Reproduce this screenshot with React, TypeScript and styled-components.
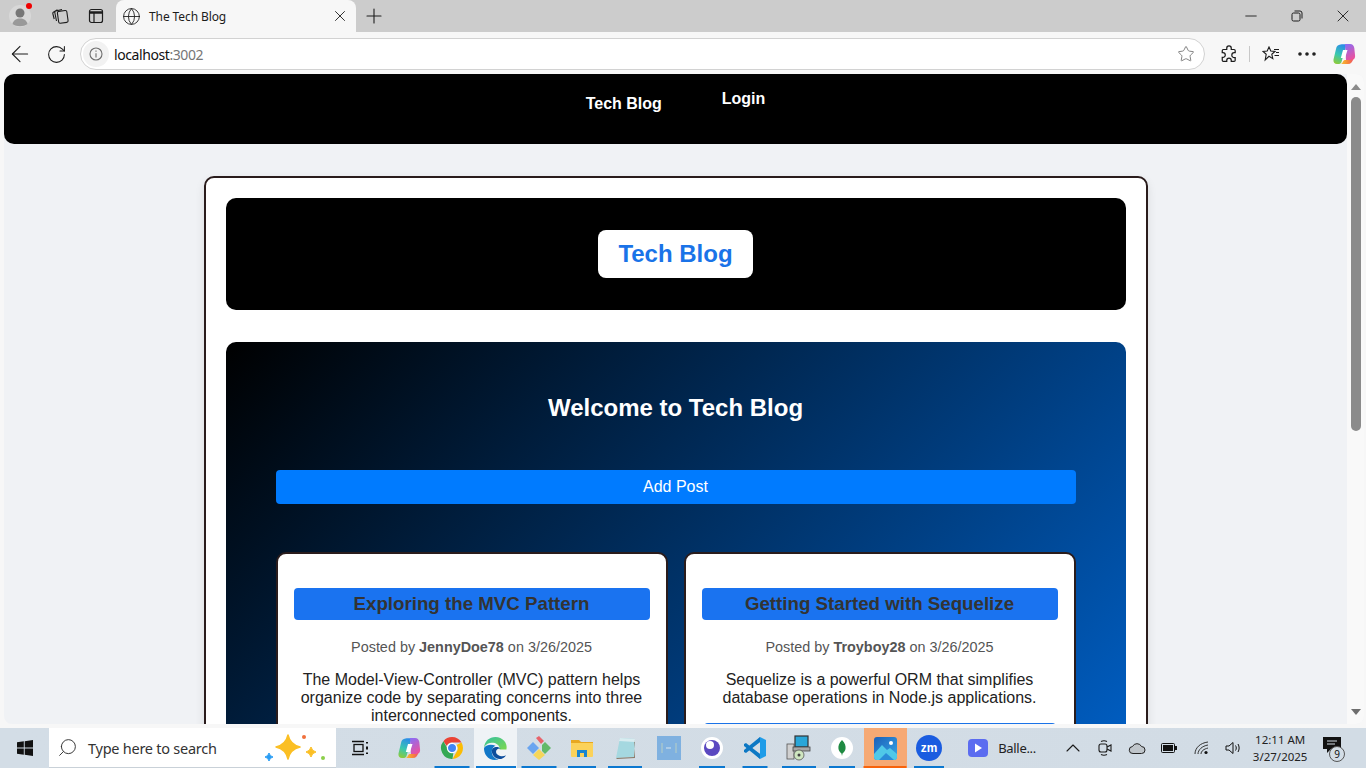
import React from "react";
import styled, { createGlobalStyle } from "styled-components";
import { ArrowLeft, RotateCw, Star, MoreHorizontal, X, Plus, Minus, Globe, Search, ChevronUp } from "lucide-react";

const GlobalStyle = createGlobalStyle`
  html, body {
    margin: 0;
    padding: 0;
    height: 100%;
    overflow: hidden;
    font-family: "Liberation Sans", Arial, sans-serif;
  }
  * { box-sizing: border-box; }
`;

const Screen = styled.div`
  width: 1366px;
  height: 768px;
  display: flex;
  flex-direction: column;
  background: #f7f7f7;
  overflow: hidden;
`;

/* browser chrome */
const TabStrip = styled.div`
  height: 32px;
  flex: none;
  background: #cccccc;
  display: flex;
  align-items: flex-end;
  color: #1c1c1c;
`;

const StripButton = styled.div<{ $w: number }>`
  width: ${(p) => p.$w}px;
  height: 32px;
  flex: none;
  display: flex;
  align-items: center;
  justify-content: center;
`;

const Avatar = styled.div`
  position: relative;
  width: 40px;
  height: 32px;
  flex: none;
  display: flex;
  align-items: center;
  justify-content: center;
`;

const RedDot = styled.span`
  position: absolute;
  top: 3px;
  left: 26px;
  width: 6px;
  height: 6px;
  border-radius: 50%;
  background: #f00000;
`;

const Tab = styled.div`
  width: 240px;
  height: 32px;
  flex: none;
  margin-left: 4px;
  background: #f7f7f7;
  border-radius: 8px 8px 0 0;
  display: flex;
  align-items: center;
  padding: 0 7px 0 6px;
  font-family: "Noto Sans", sans-serif;
  font-size: 12px;
`;

const TabTitle = styled.span`
  flex: 1;
  margin-left: 8px;
  letter-spacing: -0.1px;
`;

const StripSpacer = styled.div`
  flex: 1;
`;

const Toolbar = styled.div`
  height: 40px;
  flex: none;
  background: #f7f7f7;
  display: flex;
  align-items: center;
  color: #1c1c1c;
  padding-top: 4px;
`;

const ToolButton = styled.div<{ $w: number }>`
  width: ${(p) => p.$w}px;
  height: 32px;
  flex: none;
  display: flex;
  align-items: center;
  justify-content: center;
`;

const AddressBar = styled.div`
  width: 1125px;
  height: 32px;
  flex: none;
  margin: 0 4px 0 8px;
  background: #ffffff;
  border: 1px solid #d2d2d2;
  border-radius: 16px;
  display: flex;
  align-items: center;
  padding: 0 9px 0 2px;
`;

const InfoPill = styled.div`
  width: 26px;
  height: 26px;
  flex: none;
  border-radius: 50%;
  background: #f2f2f2;
  display: flex;
  align-items: center;
  justify-content: center;
`;

const Url = styled.div`
  flex: 1;
  margin-left: 5px;
  font-family: "Noto Sans", sans-serif;
  font-size: 14px;
  letter-spacing: -0.42px;
  color: #111111;
  span { color: #767676; }
`;

const ToolDivider = styled.div`
  width: 1px;
  height: 16px;
  flex: none;
  background: #c8c8c8;
`;

/* page viewport */
const Viewport = styled.div`
  height: 650px;
  flex: none;
  margin: 2px 2px 4px 4px;
  border-radius: 8px;
  background: #f0f2f5;
  display: flex;
  overflow: hidden;
`;

const PageScroll = styled.div`
  flex: 1;
  min-width: 0;
  overflow: hidden;
`;

const ScrollTrack = styled.div`
  width: 17px;
  flex: none;
  background: #f9f9f9;
  display: flex;
  flex-direction: column;
  align-items: center;
  padding-top: 10px;
`;

const ScrollThumb = styled.div`
  width: 10px;
  height: 334px;
  margin-top: 7px;
  border-radius: 5px;
  background: #8b8b8b;
`;

const ScrollDown = styled.div`
  margin-top: auto;
  margin-bottom: 9px;
  line-height: 0;
`;

const NavBar = styled.nav`
  height: 70px;
  background: #000000;
  border-radius: 10px;
  display: flex;
  justify-content: center;
  gap: 60px;
  padding-top: 16px;
  color: #ffffff;
  font-size: 16px;
  font-weight: 700;
  line-height: 18px;
`;

const NavBrand = styled.div`
  margin-top: 5px;
`;

const NavLink = styled.div``;

const Container = styled.div`
  width: 944px;
  margin: 32px auto 0;
  padding: 20px;
  background: #ffffff;
  border: 2px solid #2a1c1c;
  border-radius: 10px;
  box-shadow: 0 4px 10px rgba(0, 0, 0, 0.1);
`;

const Hero = styled.header`
  height: 112px;
  background: #000000;
  border-radius: 10px;
  display: flex;
  align-items: center;
  justify-content: center;
`;

const Logo = styled.div`
  width: 155px;
  height: 48px;
  background: #ffffff;
  border-radius: 8px;
  display: flex;
  align-items: center;
  justify-content: center;
  color: #1a73e8;
  font-size: 24px;
  font-weight: 700;
`;

const Main = styled.main`
  margin-top: 32px;
  min-height: 810px;
  padding: 52px 50px 40px;
  border-radius: 10px;
  background: linear-gradient(135deg, #000000, #007bff);
`;

const Welcome = styled.h2`
  margin: 0;
  color: #ffffff;
  font-size: 24px;
  line-height: 28px;
  font-weight: 700;
  text-align: center;
`;

const AddPost = styled.button`
  display: block;
  width: 100%;
  height: 34px;
  margin-top: 48px;
  border: none;
  border-radius: 4px;
  background: #007bff;
  color: #ffffff;
  font-family: inherit;
  font-size: 16px;
`;

const PostGrid = styled.div`
  margin-top: 48px;
  display: grid;
  grid-template-columns: 1fr 1fr;
  gap: 16px;
`;

const Card = styled.article`
  background: #ffffff;
  border: 2px solid #2a1c1c;
  border-radius: 10px;
  padding: 34px 16px 16px;
  text-align: center;
`;

const CardTitle = styled.h3`
  margin: 0;
  height: 32px;
  background: #1a73f0;
  border-radius: 4px;
  color: #333333;
  font-size: 18.72px;
  line-height: 31px;
  font-weight: 700;
`;

const Meta = styled.p`
  margin: 19px 0 0;
  color: #555555;
  font-size: 14.4px;
  line-height: 16px;
`;

const Body = styled.p`
  margin: 16px 0 0;
  color: #222222;
  font-size: 16px;
  line-height: 18px;
`;

const CardAction = styled.div`
  height: 34px;
  margin: 16px 2px 0;
  background: #1a73e8;
  border-radius: 4px;
`;

/* windows taskbar */
const Taskbar = styled.div`
  height: 40px;
  flex: none;
  background: linear-gradient(90deg, #d3dde6, #d2dce5);
  display: flex;
  align-items: stretch;
`;

const StartButton = styled.div`
  width: 49px;
  flex: none;
  display: flex;
  align-items: center;
  justify-content: center;
`;

const SearchBox = styled.div`
  width: 287px;
  flex: none;
  background: #ffffff;
  border-bottom: 1px solid #c9d1d8;
  display: flex;
  align-items: center;
  padding-left: 8px;
  font-family: "Noto Sans", sans-serif;
  font-size: 14.5px;
  color: #333333;
`;

const SearchGlass = styled(Search)`
  transform: scaleX(-1);
`;

const SearchText = styled.span`
  flex: 1;
  margin-left: 10px;
  letter-spacing: -0.25px;
`;

const SearchSparkles = styled.svg`
  margin-right: 9px;
`;

const TaskIcons = styled.div`
  display: flex;
  margin-left: 8px;
  flex: none;
`;

const TaskItem = styled.div<{ $line?: number; $active?: boolean; $open?: boolean }>`
  position: relative;
  width: 43.3px;
  flex: none;
  display: flex;
  align-items: center;
  justify-content: center;
  background: ${(p) => (p.$open ? "#f6a974" : p.$active ? "#eff3f6" : "transparent")};

  &::after {
    content: "";
    position: absolute;
    left: 50%;
    bottom: 0;
    transform: translateX(-50%);
    width: ${(p) => p.$line ?? 0}px;
    height: 2px;
    background: ${(p) => (p.$open ? "#f7630c" : "#0b78d0")};
  }
`;

const TaskViewGlyph = styled.svg`
  margin-right: 12px;
`;

const AppButton = styled.div`
  width: 107px;
  flex: none;
  display: flex;
  align-items: center;
  gap: 10px;
  padding-left: 18px;
  font-family: "Noto Sans", sans-serif;
  font-size: 13px;
  letter-spacing: -0.3px;
  color: #222222;
`;

const TrayIcon = styled.div`
  width: 32px;
  flex: none;
  display: flex;
  align-items: center;
  justify-content: center;
  color: #1a1a1a;
`;

const Clock = styled.div`
  width: 62px;
  flex: none;
  display: flex;
  flex-direction: column;
  align-items: center;
  justify-content: center;
  font-family: "Noto Sans", sans-serif;
  font-size: 11.5px;
  line-height: 17px;
  color: #222222;
`;

const Notify = styled.div`
  position: relative;
  flex: 1;
  display: flex;
  align-items: center;
  justify-content: center;
`;

const NotifyGlyph = styled.svg`
  margin: -6px 14px 0 0;
`;

const NotifyBadge = styled.span`
  position: absolute;
  left: 18px;
  top: 18px;
  width: 16px;
  height: 16px;
  border-radius: 50%;
  background: #d3dde6;
  border: 1px solid #555555;
  font-family: "Noto Sans", sans-serif;
  font-size: 10px;
  line-height: 14px;
  text-align: center;
  color: #111111;
`;

const spark = (x: number, y: number, r: number) => {
  const k = r * 0.18;
  return `M${x} ${y - r}Q${x + k} ${y - k} ${x + r} ${y}Q${x + k} ${y + k} ${x} ${y + r}Q${x - k} ${y + k} ${x - r} ${y}Q${x - k} ${y - k} ${x} ${y - r}Z`;
};

function CopilotLogo({ size }: { size: number }) {
  return (
    <svg width={size} height={size} viewBox="0 0 24 24">
      <defs>
        <linearGradient id="cpA" x1="0.6" y1="0" x2="0.3" y2="1">
          <stop offset="0" stopColor="#2b8ce8" />
          <stop offset="0.55" stopColor="#38c8b0" />
          <stop offset="1" stopColor="#8ccb3c" />
        </linearGradient>
        <linearGradient id="cpB" x1="0.3" y1="0" x2="0.7" y2="1">
          <stop offset="0" stopColor="#8f6cf0" />
          <stop offset="1" stopColor="#f0509a" />
        </linearGradient>
        <linearGradient id="cpC" x1="0" y1="0" x2="1" y2="0">
          <stop offset="0" stopColor="#f5d030" />
          <stop offset="0.6" stopColor="#f78a38" />
          <stop offset="1" stopColor="#f0506a" />
        </linearGradient>
      </defs>
      <path d="M8.500 2.500C10 2 13 2 14.500 2.500L9.500 20C9 21.500 8 22 6 22H5C2.500 22 1 20 1.500 17.500L4 7C4.500 4 6 3 8.500 2.500Z" fill="url(#cpA)" />
      <path d="M13 2H18C20.500 2 21.800 3.500 22.300 6L23 13C23.500 16 22 18 19 18H14Z" fill="url(#cpB)" />
      <path d="M7 22H16C19 22 20.500 20 21.500 16.500C20.500 17.800 19 18 17 18H13C11.500 18 11 19.500 10.500 20.500C10 21.500 9 22 7 22Z" fill="url(#cpC)" />
      <path d="M11 8H15.500L13 16H8.800Z" fill="#ffffff" />
    </svg>
  );
}

function ChromeLogo() {
  return (
    <svg width="24" height="24" viewBox="0 0 24 24">
      <path d="M12 1a11 11 0 0 1 9.500 5.500H12a5.500 5.500 0 0 0-5.200 3.600L3.400 5.200A11 11 0 0 1 12 1z" fill="#ea4335" />
      <path d="M21.500 6.500A11 11 0 0 1 12.500 23l4.300-7.500A5.500 5.500 0 0 0 16.500 9z" fill="#fbbc04" />
      <path d="M12.500 23A11 11 0 0 1 3.400 5.200l4.500 8a5 5 0 0 0 5.500 3.300z" fill="#34a853" />
      <circle cx="12" cy="12" r="4.600" fill="#4285f4" stroke="#ffffff" strokeWidth="1.200" />
    </svg>
  );
}

function EdgeLogo() {
  return (
    <svg width="25" height="25" viewBox="0 0 24 24">
      <defs>
        <linearGradient id="edA" x1="0" y1="0" x2="1" y2="1">
          <stop offset="0" stopColor="#35c1a0" />
          <stop offset="1" stopColor="#7bd84e" />
        </linearGradient>
      </defs>
      <path d="M12 1C6 1 1.500 5 1 11c2-4 6-5 9-4.500 4 .7 6.500 3.500 6 6.500h6.500C24 6.500 18.500 1 12 1z" fill="url(#edA)" />
      <path d="M1 11c-.5 6 3.500 12 10.500 12 1.500 0 2.500-.2 3.500-.6-4-.6-7-3.800-6.500-8 .3-2.500 1.800-4.400 3.500-5-4-2-9-1-10.500 1.600z" fill="#1278c8" />
      <path d="M8.500 14.500c0 4.500 4 8.500 9 7.500 2-.5 3.800-2 4.500-3.500-2 1.200-5.500 1.200-7.500-.3-1.500-1-2-2.200-2-3.200 0-2 2-3.500 4.500-3-2.500-2.500-8.500-2-8.500 2.500z" fill="#0c4d9c" />
    </svg>
  );
}

function TaskSvg({ name }: { name: string }) {
  switch (name) {
    case "git":
      return (
        <svg width="26" height="26" viewBox="0 0 26 26">
          <path d="M1 13l6-6 6 6-6 6z" fill="#6aa5f0" />
          <path d="M10 3l3-2 5 5-3 3z" fill="#e8636b" />
          <path d="M16 10l3-3 6 6-6 6-3-3z" fill="#63b96a" />
          <path d="M7 20l6-6 6 6-6 5z" fill="#f5d65a" />
        </svg>
      );
    case "folder":
      return (
        <svg width="24" height="24" viewBox="0 0 24 24">
          <path d="M1 4h8l2 2h12v4H1z" fill="#e8a820" />
          <path d="M1 7h22v13a1 1 0 0 1-1 1H2a1 1 0 0 1-1-1z" fill="#fbd25a" />
          <path d="M7 14h10v7h-3v-4h-4v4H7z" fill="#1a86d0" />
        </svg>
      );
    case "notepad":
      return (
        <svg width="24" height="24" viewBox="0 0 24 24">
          <path d="M7 2l15 1-1 18-18 1z" fill="#a5d8e0" />
          <path d="M21 4l1-1-1 18-18 1 1 1 18-1z" fill="#8a7a68" />
          <path d="M7 2l15 1-.2 3L6 5z" fill="#d8ecf0" />
        </svg>
      );
    case "box":
      return (
        <svg width="24" height="24" viewBox="0 0 24 24">
          <rect width="24" height="24" fill="#7fb1e0" />
          <path d="M5 7v10M19 7v10" stroke="#b9cfc4" strokeWidth="1" />
          <path d="M9 12h5" stroke="#d8e6f0" strokeWidth="1" />
        </svg>
      );
    case "moon":
      return (
        <svg width="22" height="22" viewBox="0 0 22 22">
          <circle cx="11" cy="11" r="11" fill="#ffffff" />
          <circle cx="11" cy="11" r="8" fill="#5a48c0" />
          <circle cx="9" cy="8" r="4" fill="#ffffff" />
        </svg>
      );
    case "vscode":
      return (
        <svg width="24" height="24" viewBox="0 0 24 24">
          <path d="M17 1l6 3v16l-6 3-10-10z" fill="#1f9ce8" />
          <path d="M17 6v12l-9-6z" fill="#d3dde6" />
          <path d="M1 8l2-1 14 11v5L1 10z" fill="#0d78c4" />
          <path d="M1 16l2 1L17 6V1L1 14z" fill="#0d78c4" />
        </svg>
      );
    case "installer":
      return (
        <svg width="26" height="26" viewBox="0 0 26 26">
          <rect x="1" y="9" width="7" height="15" fill="#d0d0d0" stroke="#555" strokeWidth="0.8" />
          <rect x="9" y="1" width="13" height="11" fill="#2aa6d8" stroke="#333" strokeWidth="1.200" />
          <rect x="7" y="12" width="17" height="4" fill="#a8a8a8" stroke="#444" strokeWidth="0.8" />
          <circle cx="13" cy="20" r="5" fill="#cfe6c0" stroke="#555" strokeWidth="0.8" />
          <circle cx="13" cy="20" r="1.500" fill="#444" />
        </svg>
      );
    case "mongo":
      return (
        <svg width="22" height="22" viewBox="0 0 22 22">
          <circle cx="11" cy="11" r="11" fill="#ffffff" />
          <path d="M11 3c3 3 4 6 3.500 9-.4 2-2 3.500-3 4.500l-.5 2.500-.5-2.500c-1-1-2.600-2.500-3-4.500C7 9 8 6 11 3z" fill="#1f8a42" />
        </svg>
      );
    case "photos":
      return (
        <svg width="23" height="23" viewBox="0 0 23 23">
          <defs>
            <linearGradient id="phA" x1="0" y1="0" x2="1" y2="1">
              <stop offset="0" stopColor="#1c5fb8" />
              <stop offset="1" stopColor="#35a8e8" />
            </linearGradient>
          </defs>
          <rect width="23" height="23" rx="3" fill="url(#phA)" />
          <path d="M0 17l8-9 5 5 3-2 7 6v3a3 3 0 0 1-3 3H3a3 3 0 0 1-3-3z" fill="#4fc8e8" />
          <path d="M5 23l7-7 8 7z" fill="#2a8cd8" />
          <circle cx="17" cy="6" r="2" fill="#ffffff" />
        </svg>
      );
    default:
      return (
        <svg width="26" height="26" viewBox="0 0 24 24">
          <circle cx="12" cy="12" r="12" fill="#1a5ce0" />
          <text x="12" y="16" textAnchor="middle" fontFamily="Liberation Sans" fontWeight="700" fontSize="11" fill="#ffffff">zm</text>
        </svg>
      );
  }
}

const taskApps = [
  { key: "git", line: 35 },
  { key: "folder", line: 28 },
  { key: "notepad", line: 34 },
  { key: "box", line: 0 },
  { key: "moon", line: 26 },
  { key: "vscode", line: 25 },
  { key: "installer", line: 34 },
  { key: "mongo", line: 26 },
];

const posts = [
  {
    title: "Exploring the MVC Pattern",
    author: "JennyDoe78",
    date: "3/26/2025",
    body: "The Model-View-Controller (MVC) pattern helps organize code by separating concerns into three interconnected components.",
  },
  {
    title: "Getting Started with Sequelize",
    author: "Troyboy28",
    date: "3/26/2025",
    body: "Sequelize is a powerful ORM that simplifies database operations in Node.js applications.",
  },
];

export default function App() {
  return (
    <Screen>
      <GlobalStyle />
      <TabStrip>
        <Avatar>
          <svg width="22" height="24" viewBox="0 0 22 24">
            <circle cx="11" cy="12" r="11" fill="#d8d8d8" />
            <circle cx="11" cy="9" r="4.500" fill="#777" />
            <path d="M3.500 20c1-4 4-5.500 7.500-5.500s6.500 1.500 7.500 5.500c-4 3-11 3-15 0z" fill="#999" />
          </svg>
          <RedDot />
        </Avatar>
        <StripButton $w={40}>
          <svg width="18" height="18" viewBox="0 0 18 18" fill="none" stroke="#1c1c1c" strokeWidth="1.100">
            <rect x="7" y="4" width="9.500" height="12" rx="1.500" transform="rotate(-8 11 10)" />
            <path d="M5.500 14L3.800 5.500c-.1-.8.300-1.300 1-1.500L11 2.500M3.200 12L1.800 6.500c-.2-.8.200-1.300.8-1.600L6.500 2.800" />
          </svg>
        </StripButton>
        <StripButton $w={32}>
          <svg width="16" height="16" viewBox="0 0 16 16" fill="none" stroke="#1c1c1c" strokeWidth="1.200">
            <rect x="1.500" y="1.500" width="13" height="13" rx="2" />
            <path d="M1.500 4.500h13" strokeWidth="2.500" />
            <path d="M6 5v9.500" />
          </svg>
        </StripButton>
        <Tab>
          <Globe size={19} strokeWidth={1.1} />
          <TabTitle>The Tech Blog</TabTitle>
          <X size={18} strokeWidth={1.2} />
        </Tab>
        <StripButton $w={36}>
          <Plus size={24} strokeWidth={1.1} />
        </StripButton>
        <StripSpacer />
        <StripButton $w={46}>
          <Minus size={18} strokeWidth={1.2} />
        </StripButton>
        <StripButton $w={46}>
          <svg width="12" height="12" viewBox="0 0 12 12" fill="none" stroke="#1c1c1c" strokeWidth="1">
            <rect x="1" y="3" width="8" height="8" rx="1.500" />
            <path d="M3.500 1h5.500a2 2 0 0 1 2 2v5.500" />
          </svg>
        </StripButton>
        <StripButton $w={46}>
          <X size={20} strokeWidth={1.1} />
        </StripButton>
      </TabStrip>

      <Toolbar>
        <ToolButton $w={40}>
          <ArrowLeft size={26} strokeWidth={1} />
        </ToolButton>
        <ToolButton $w={32}>
          <RotateCw size={21} strokeWidth={1.2} />
        </ToolButton>
        <AddressBar>
          <InfoPill>
            <svg width="14" height="14" viewBox="0 0 14 14" fill="none" stroke="#6e6e6e" strokeWidth="1.100">
              <circle cx="7" cy="7" r="6" />
              <path d="M7 6.200V10.500M7 3.600v1.200" />
            </svg>
          </InfoPill>
          <Url>
            localhost<span>:3002</span>
          </Url>
          <Star size={18} strokeWidth={1.1} color="#6a6a6a" />
        </AddressBar>
        <ToolButton $w={40}>
          <svg width="18" height="18" viewBox="0 0 16 16" fill="none" stroke="#1c1c1c" strokeWidth="1.100">
            <path d="M6 2.800a2 2 0 0 1 4 0V4h2.500a1 1 0 0 1 1 1v1.800h-.8a2 2 0 0 0 0 4.400h.8v2.300a1 1 0 0 1-1 1H10v-.8a2 2 0 0 0-4 0v.8H3a1 1 0 0 1-1-1V11h.6a2 2 0 0 0 0-4.200H2V5a1 1 0 0 1 1-1h3z" />
          </svg>
        </ToolButton>
        <ToolDivider />
        <ToolButton $w={41}>
          <svg width="18" height="16" viewBox="0 0 18 16" fill="none" stroke="#1c1c1c" strokeWidth="1.100">
            <path d="M7 1l1.800 4 4.200.4-3.200 2.900 1 4.300L7 10.300 3.200 14l1-5.700L1 5.400 5.200 5z" />
            <path d="M12 3.500h5M14 6.500h3M12.500 9.500h4.500" />
          </svg>
        </ToolButton>
        <ToolButton $w={32}>
          <MoreHorizontal size={24} strokeWidth={1.6} />
        </ToolButton>
        <ToolButton $w={42}>
          <CopilotLogo size={24} />
        </ToolButton>
      </Toolbar>

      <Viewport>
        <PageScroll>
          <NavBar>
            <NavBrand>Tech Blog</NavBrand>
            <NavLink>Login</NavLink>
          </NavBar>
          <Container>
            <Hero>
              <Logo>Tech Blog</Logo>
            </Hero>
            <Main>
              <Welcome>Welcome to Tech Blog</Welcome>
              <AddPost>Add Post</AddPost>
              <PostGrid>
                {posts.map((post) => (
                  <Card key={post.title}>
                    <CardTitle>{post.title}</CardTitle>
                    <Meta>
                      Posted by <strong>{post.author}</strong> on {post.date}
                    </Meta>
                    <Body>{post.body}</Body>
                    <CardAction />
                  </Card>
                ))}
              </PostGrid>
            </Main>
          </Container>
        </PageScroll>
        <ScrollTrack>
          <svg width="10" height="6" viewBox="0 0 10 6">
            <path d="M5 0l5 6H0z" fill="#8b8b8b" />
          </svg>
          <ScrollThumb />
          <ScrollDown>
            <svg width="10" height="6" viewBox="0 0 10 6">
              <path d="M5 6l5-6H0z" fill="#6e6e6e" />
            </svg>
          </ScrollDown>
        </ScrollTrack>
      </Viewport>

      <Taskbar>
        <StartButton>
          <svg width="16" height="16" viewBox="0 0 16 16" fill="#111111">
            <path d="M0 2.300l6.800-1v6.300H0zM7.700 1.200L16 0v7.600H7.700zM0 8.400h6.800v6.300l-6.800-1zM7.700 8.400H16V16l-8.300-1.200z" />
          </svg>
        </StartButton>
        <SearchBox>
          <SearchGlass size={21} strokeWidth={1.1} />
          <SearchText>Type here to search</SearchText>
          <SearchSparkles width="66" height="30" viewBox="0 0 66 30">
            <path d={spark(27, 14, 12)} fill="#fbbf24" stroke="#fbbf24" strokeWidth="1.500" strokeLinejoin="round" />
            <path d={spark(50, 19, 5)} fill="#fbbf24" stroke="#fbbf24" strokeWidth="1" />
            <path d={spark(8, 24, 4)} fill="#2a9df4" stroke="#2a9df4" strokeWidth="1" />
            <circle cx="43" cy="4" r="2" fill="#f0703c" />
            <circle cx="62" cy="25" r="2" fill="#8ccf4a" />
          </SearchSparkles>
        </SearchBox>
        <TaskIcons>
          <TaskItem>
            <TaskViewGlyph width="18" height="18" viewBox="0 0 18 18" fill="none" stroke="#111" strokeWidth="1.300">
              <path d="M1 2.500h12M1 15.500h12" />
              <rect x="3" y="5.500" width="9" height="7" />
              <path d="M16 3v1.500M16 7.500v3M16 13.500V15" strokeWidth="2" />
            </TaskViewGlyph>
          </TaskItem>
          <TaskItem>
            <CopilotLogo size={24} />
          </TaskItem>
          <TaskItem $line={35}>
            <ChromeLogo />
          </TaskItem>
          <TaskItem $active $line={40}>
            <EdgeLogo />
          </TaskItem>
          {taskApps.map((app) => (
            <TaskItem key={app.key} $line={app.line}>
              <TaskSvg name={app.key} />
            </TaskItem>
          ))}
          <TaskItem $open $line={43}>
            <TaskSvg name="photos" />
          </TaskItem>
          <TaskItem $line={30}>
            <TaskSvg name="zoom" />
          </TaskItem>
        </TaskIcons>
        <AppButton>
          <svg width="20" height="18" viewBox="0 0 20 18">
            <rect width="20" height="18" rx="4" fill="#5b6cf0" />
            <path d="M7 4.500l7 4.500-7 4.500z" fill="#ffffff" />
          </svg>
          Balle...
        </AppButton>
        <TrayIcon>
          <ChevronUp size={24} strokeWidth={1.1} />
        </TrayIcon>
        <TrayIcon>
          <svg width="14" height="18" viewBox="0 0 14 18" fill="none" stroke="#1a1a1a" strokeWidth="1.100">
            <rect x="1" y="5" width="8" height="8" rx="2" />
            <path d="M9 8l4-2v6l-4-2M3 2.500c2-1 4-1 6 0M3 15.500c2 1 4 1 6 0" />
          </svg>
        </TrayIcon>
        <TrayIcon>
          <svg width="18" height="12" viewBox="0 0 18 12">
            <path d="M5 11.500a3.500 3.500 0 0 1-.5-7 5 5 0 0 1 9 0 3.300 3.300 0 0 1 0 7z" fill="#bfc5ca" stroke="#222" strokeWidth="1" />
          </svg>
        </TrayIcon>
        <TrayIcon>
          <svg width="16" height="10" viewBox="0 0 16 10" fill="none">
            <rect x="0.500" y="0.500" width="13" height="9" rx="1" stroke="#111" />
            <rect x="2" y="2" width="10" height="6" fill="#111" />
            <rect x="14" y="3" width="2" height="4" fill="#111" />
          </svg>
        </TrayIcon>
        <TrayIcon>
          <svg width="15" height="14" viewBox="0 0 15 14" fill="none" stroke="#333" strokeWidth="1">
            <path d="M1 13C1 7 6 2 14 1M4 13c0-4 4-8 10-9M7 13c0-3 3-5 7-6" />
            <circle cx="12" cy="11.500" r="1.600" fill="#111" stroke="none" />
          </svg>
        </TrayIcon>
        <TrayIcon>
          <svg width="16" height="14" viewBox="0 0 16 14" fill="none" stroke="#111" strokeWidth="1">
            <path d="M1 5h3l4-3.500v11L4 9H1z" />
            <path d="M10.500 4.500c1 1.500 1 3.500 0 5M13 3c1.500 2.500 1.500 5.500 0 8" />
          </svg>
        </TrayIcon>
        <Clock>
          <span>12:11 AM</span>
          <span>3/27/2025</span>
        </Clock>
        <Notify>
          <NotifyGlyph width="18" height="16" viewBox="0 0 18 16">
            <path d="M0 0h18v12H8l-4 4v-4H0z" fill="#111" />
            <path d="M4 4h10M4 7h8" stroke="#d3dde6" strokeWidth="1" />
          </NotifyGlyph>
          <NotifyBadge>9</NotifyBadge>
        </Notify>
      </Taskbar>
    </Screen>
  );
}
